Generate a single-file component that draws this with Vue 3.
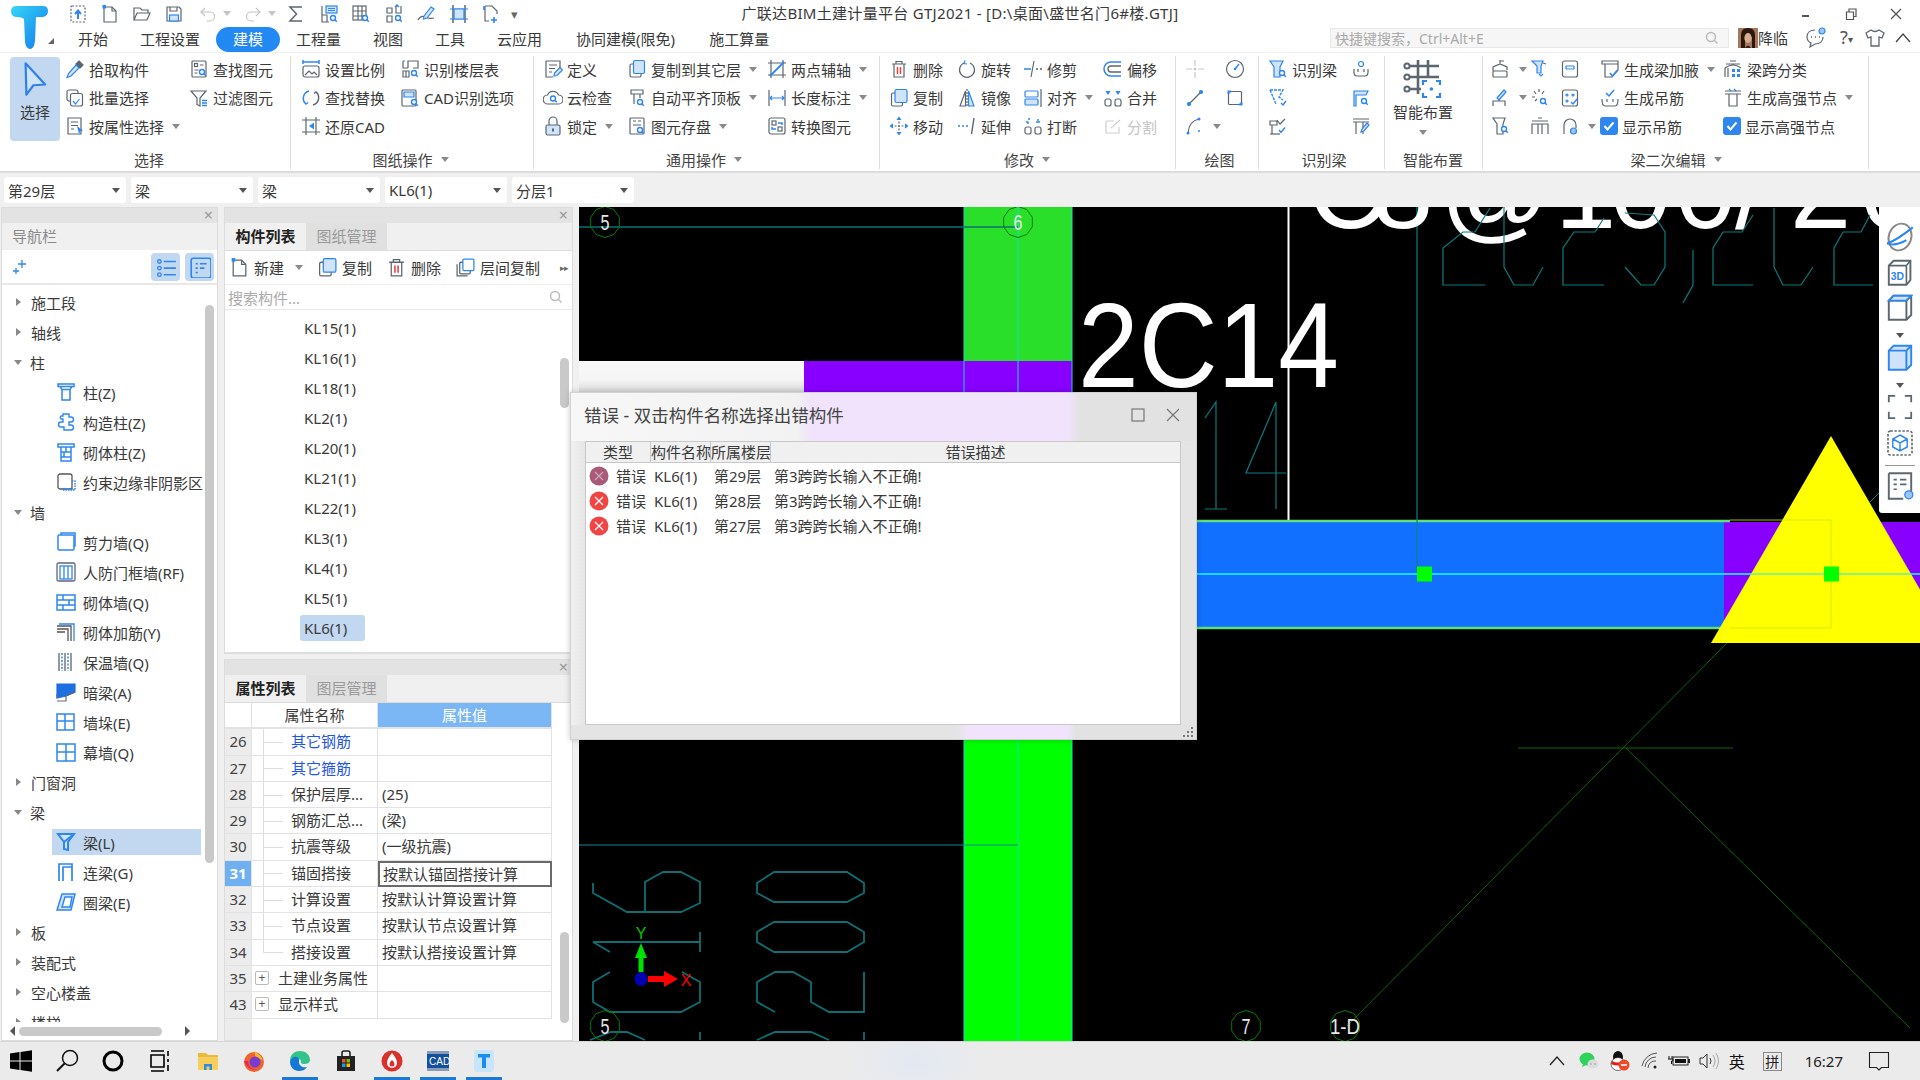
<template>
  <div class="app">
    <!-- title + menu -->
    <header class="top">
      <svg class="logo" width="62" height="52" viewBox="0 0 62 52">
        <defs>
          <linearGradient id="lg" x1="0" y1="0" x2="1" y2="1">
            <stop offset="0" stop-color="#35d6f5" />
            <stop offset="1" stop-color="#1379ee" />
          </linearGradient>
        </defs>
        <path d="M11 11q0-5 6-5h26q5 0 5 5t-5 6h-7l-1 24q-1 8-5 8t-5-7l-1-23q-2-2-7-2-6 0-6-6z" fill="url(#lg)" />
        <path d="M48 44l6 0 0-6z" fill="#666" />
      </svg>
      <div class="top-right">
        <div class="title-row">
          <div class="quick">
            <Ic n="upload" /><Ic n="newdoc" /><Ic n="open" /><Ic n="save" />
            <Ic n="undo" class="q-undo" /><i class="tri grey q-tri" />
            <Ic n="redo" class="q-redo" /><i class="tri grey q-tri" />
          </div>
          <div class="quick quick2">
            <Ic n="sigma" /><Ic n="qtable" /><Ic n="qgrid" /><Ic n="qnode" /><Ic n="qpen" /><Ic n="qcols" /><Ic n="qadd" />
            <span class="q-more">▾</span>
          </div>
          <div class="win-title">广联达BIM土建计量平台 GTJ2021 - [D:\桌面\盛世名门6#楼.GTJ]</div>
          <div class="win-btns">
            <svg width="12" height="12" viewBox="0 0 12 12"><path d="M2 8h7" stroke="#555" stroke-width="2" /></svg>
            <svg width="12" height="12" viewBox="0 0 12 12" fill="none" stroke="#555" stroke-width="1.2"><path d="M1.5 4h7v7.5h-7zM4 4V1h7v7.5H8.500" /></svg>
            <svg width="12" height="12" viewBox="0 0 12 12" stroke="#555" stroke-width="1.3"><path d="M1 1l10 10M11 1L1 11" /></svg>
          </div>
        </div>
        <div class="menu-row">
          <span v-for="m in menus" :key="m" class="menu-item" :class="{ on: m === '建模', wide: m.includes('限免') }">{{ m }}</span>
          <div class="user-area">
            <div class="search">
              <span>快捷键搜索，Ctrl+Alt+E</span>
              <svg width="14" height="14" viewBox="0 0 14 14" fill="none" stroke="#bbb" stroke-width="1.5"><circle cx="6" cy="6" r="4.500" /><path d="M9.500 9.500l3 3" /></svg>
            </div>
            <svg class="avatar" width="20" height="20" viewBox="0 0 20 20">
              <rect width="20" height="20" fill="#a57a5c" />
              <path d="M3 20V7q0-7 7-7t7 7v13h-3V9q-4-1-7 0v11z" fill="#2a1712" />
              <ellipse cx="10" cy="10" rx="3.600" ry="5" fill="#d8ac8e" />
              <path d="M7 20q3-5 6 0z" fill="#3a2018" />
            </svg>
            <span class="user">降临</span>
            <svg class="u-chat" width="22" height="22" viewBox="0 0 22 22" fill="none" stroke="#5c6670" stroke-width="1.2">
              <path d="M10 3C5 3 2 6 2 10c0 3 2 5 4 6l-1 4 5-3c5 0 8-3 8-7" />
              <circle cx="17" cy="4" r="3" fill="#9cc4f5" stroke="#2e86f0" />
              <path d="M6 10h1M10 10h1M14 10h1" stroke-width="1.6" />
            </svg>
            <span class="u-help">?<i>▾</i></span>
            <svg class="u-shirt" width="20" height="20" viewBox="0 0 20 20" fill="none" stroke="#5c6670" stroke-width="1.3"><path d="M6 2L1 5l2 5 3-1v9h8V9l3 1 2-5-5-3q-4 3-8 0z" /></svg>
            <svg class="u-up" width="18" height="12" viewBox="0 0 18 12" fill="none" stroke="#444" stroke-width="1.3"><path d="M2 10l7-8 7 8" /></svg>
          </div>
        </div>
      </div>
    </header>

    <!-- ribbon -->
    <section class="ribbon">
      <div v-for="g in groups" :key="g.name" class="group" :style="{ width: g.w + 'px' }">
        <div class="group-body" :style="{ paddingLeft: g.pl + 'px' }">
          <div v-if="g.big === 'select'" class="big-select">
            <svg width="28" height="36" viewBox="0 0 32 46" fill="#cfe3fb" stroke="#2e80ea" stroke-width="2.8" stroke-linejoin="round"><path d="M4 3l25 27-15 1-9 12z" /></svg>
            <span>选择</span>
          </div>
          <div v-if="g.big === 'smart'" class="big-smart">
            <Ic n="smart" :s="40" />
            <span>智能布置</span>
            <i class="tri" />
          </div>
          <div v-for="(col, ci) in g.cols" :key="ci" class="rcol" :style="{ width: col.w + 'px' }">
            <div v-for="(it, ii) in col.items" :key="ii" class="ritem" :class="{ dis: it.dis }">
              <span v-if="it.check" class="check"><svg width="14" height="14" viewBox="0 0 14 14" fill="none" stroke="#fff" stroke-width="2"><path d="M2.500 7l3 3.500 6-7" /></svg></span>
              <Ic v-if="it.i" :n="it.i" />
              <span v-if="it.t" class="rtext">{{ it.t }}</span>
              <i v-if="it.arrow" class="tri" />
            </div>
          </div>
        </div>
        <div class="group-label" :style="{ marginLeft: (g.lx || 0) + 'px' }">{{ g.name }}<i v-if="g.more" class="tri" /></div>
      </div>
    </section>

    <!-- floor / type selectors -->
    <div class="combos">
      <div v-for="c in combos" :key="c.k" class="combo"><span>{{ c.t }}</span><i class="tri dark" /></div>
    </div>

    <main class="main">
      <!-- navigation -->
      <aside class="nav panel">
        <div class="panel-bar"><span>×</span></div>
        <div class="nav-head">导航栏</div>
        <div class="nav-tools">
          <svg width="14" height="16" viewBox="0 0 14 16" fill="none" stroke="#2e86f0" stroke-width="1.3"><path d="M9 1v8M5 5h8M3 9v6M0 12h6" /></svg>
          <span class="nav-btn nav-btn1"><Ic n="listv" :s="22" /></span>
          <span class="nav-btn"><Ic n="listc" :s="22" /></span>
        </div>
        <div class="tree">
          <div v-for="n in tree" :key="n.t" class="tree-row" :class="{ child: n.i, sel: n.sel }">
            <i v-if="!n.i" class="tw" :class="{ open: n.open }" />
            <Ic v-if="n.i" :n="n.i" />
            <span>{{ n.t }}</span>
          </div>
          <div class="v-thumb nav-thumb" />
        </div>
        <div class="h-scroll">
          <i class="ha left" /><div class="h-thumb" /><i class="ha" />
        </div>
      </aside>

      <div class="mid">
        <!-- component list -->
        <section class="panel mid-top">
          <div class="panel-bar"><span>×</span></div>
          <div class="tabs"><span class="tab on">构件列表</span><span class="tab">图纸管理</span></div>
          <div class="list-tools">
            <span class="lt"><Ic n="newdoc" :s="21" />新建<i class="tri" /></span>
            <span class="lt"><Ic n="copy" :s="21" />复制</span>
            <span class="lt"><Ic n="del" :s="21" />删除</span>
            <span class="lt"><Ic n="copy2" :s="21" />层间复制</span>
            <span class="lt-more">▸▸</span>
          </div>
          <div class="list-search">
            <span>搜索构件...</span>
            <svg width="14" height="14" viewBox="0 0 14 14" fill="none" stroke="#bbb" stroke-width="1.5"><circle cx="6" cy="6" r="4.500" /><path d="M9.500 9.500l3 3" /></svg>
          </div>
          <div class="list">
            <div v-for="k in beams" :key="k" class="list-row"><span :class="{ sel: k === 'KL6(1)' }">{{ k }}</span></div>
            <div class="v-thumb list-thumb" />
          </div>
        </section>

        <!-- property list -->
        <section class="panel mid-bot">
          <div class="panel-bar"><span>×</span></div>
          <div class="tabs"><span class="tab on">属性列表</span><span class="tab">图层管理</span></div>
          <div class="props">
            <div class="prow phead">
              <div class="pn blank" /><div class="pname">属性名称</div><div class="pval">属性值</div>
            </div>
            <div v-for="(p, i) in props" :key="p.n" class="prow" :class="{ act: p.n === 31 }">
              <div class="pn">{{ p.n }}</div>
              <div class="pname" :class="{ link: p.link, grp: p.grp, guide: !p.grp, last: i === 8 }">
                <i v-if="p.grp" class="plus">+</i>{{ p.name }}
              </div>
              <div class="pval">{{ p.val }}</div>
            </div>
            <div class="v-thumb prop-thumb" />
          </div>
        </section>
      </div>

      <!-- drawing canvas -->
      <div class="canvas">
        <svg class="cad" viewBox="579 207 1341 834" width="1341" height="834" fill="none">
          <defs>
            <linearGradient id="fade" x1="0" y1="0" x2="0" y2="1">
              <stop offset="0" stop-color="#f8f8f8" />
              <stop offset="0.6" stop-color="#f5f5f5" />
              <stop offset="1" stop-color="#dadada" />
            </linearGradient>
          </defs>
          <!-- beam + column fills -->
          <rect x="964" y="207" width="108" height="154" fill="#2adf2a" />
          <rect x="964" y="392" width="108" height="649" fill="#00ff00" />
          <rect x="579" y="361" width="225" height="31" fill="url(#fade)" />
          <rect x="804" y="361" width="268" height="31" fill="#8800ff" />
          <rect x="1190" y="522" width="534" height="106" fill="#1170ff" />
          <rect x="1724" y="522" width="196" height="106" fill="#8800ff" />
          <path d="M1190 521h540M1190 628h540" stroke="#5fe07a" stroke-width="2.5" />
          <path d="M964 207V1041M1072 207V1041" stroke="#16d8e0" stroke-width="1" />
          <path d="M1018 207V392M1018 741V1041" stroke="#14dcc8" stroke-width="1" />
          <path d="M579 227H1018" stroke="#0c7070" stroke-width="1.6" />
          <path d="M579 845H1018" stroke="#0f8a95" stroke-width="1" />
          <path d="M1288.500 207V520" stroke="#fff" stroke-width="2" />
          <path d="M1417 207V574" stroke="#0c8080" stroke-width="1.2" />
          <path d="M1190 574H1920" stroke="#1ce6ff" stroke-width="1.4" />
          <!-- grid lines behind -->
          <path d="M1518 748H1733M1727 643L1347 1026M1626 748L1910 1028" stroke="#0b660b" stroke-width="1" />
          <path d="M1879 493L1870 502" stroke="#0c8080" stroke-width="1" />
          <path d="M1831 436L1711 643H1951z" fill="#ffff00" />
          <path d="M1730 520H1831V628H1730" stroke="#c8e800" stroke-width="0.8" />
          <path d="M1190 574H1920" stroke="#1ce6ff" stroke-width="1.2" />
          <rect x="1417" y="566.500" width="15" height="15" fill="#00ff00" />
          <rect x="1824" y="566.500" width="15" height="15" fill="#00ff00" />
          <!-- rebar text -->
          <text class="cad-big" x="1078" y="387" font-size="120" textLength="261" lengthAdjust="spacingAndGlyphs">2C14</text>
          <text class="cad-big" x="1308 1372 1440 1555 1610 1675 1735 1790 1860" y="228" font-size="110">C8@100/20</text>
          <!-- outline letters -->
          <g stroke="#0b7c80" stroke-width="1.2">
            <path d="M1485 285H1443V248L1463 232H1475L1490 208M1504 207V267L1514 285H1533L1543 267M1604 285H1563V248L1574 232H1595L1604 218M1625 267L1641 285H1654L1665 267V232L1654 215L1625 213M1693 250V285L1683 303M1753 285H1713V248L1723 232H1742L1753 215M1774 208V267L1783 285H1801L1813 267M1873 285H1834V248L1843 232H1861L1870 215" />
            <path d="M1205 418L1216 402V509M1205 509H1227M1276 402L1246 473H1286M1276 402V509" />
          </g>
          <g stroke="#0d6f73" stroke-width="1.8">
            <path d="M593 883V893L627 912H681L700 903V882L681 872H663L645 882V912" />
            <path d="M593 942H700M700 932V952M593 942L610 952" />
            <path d="M610 972L593 982V1002L610 1012H681L700 1002V982L682 972" />
            <path d="M590 1040L611 1032H627L645 1040M700 1032V1040" />
            <path d="M757 883L774 872H847L864 883V893L847 902H774L757 893Z" />
            <path d="M757 932L774 922H847L864 932V942L847 952H774L757 942Z" />
            <path d="M775 1012L757 1002V982L775 972H793L811 982V1002L829 1012H864V972" />
            <path d="M757 1040L775 1032H811L829 1040M864 1032V1040" />
          </g>
          <!-- axis tags -->
          <g v-for="t in axisTags" :key="t.k">
            <polygon :points="ring(t.x, t.y)" stroke="#0b7a0b" stroke-width="1" />
            <text class="cad-tag" :x="t.x" :y="t.y + 8" text-anchor="middle" :textLength="t.l" lengthAdjust="spacingAndGlyphs">{{ t.t }}</text>
          </g>
          <!-- coordinate gizmo -->
          <path d="M641 972V958" stroke="#00e000" stroke-width="5" />
          <path d="M641 943L647 958H635z" fill="#00e000" />
          <path d="M648 979H664" stroke="#ff0000" stroke-width="6" />
          <path d="M678 979L664 971V987z" fill="#ff0000" />
          <ellipse cx="641" cy="979" rx="6.500" ry="7" fill="#0000b0" />
          <text class="cad-y" x="641" y="939" text-anchor="middle">Y</text>
          <text class="cad-x" x="686" y="986" text-anchor="middle">X</text>
        </svg>

        <div class="view-bar">
          <Ic n="orbit" :s="32" class="vb" />
          <Ic n="cube3d" :s="32" class="vb" />
          <Ic n="cube" :s="32" class="vb" />
          <i class="tri dark vb-tri" />
          <Ic n="cubeblue" :s="32" class="vb" />
          <i class="tri dark vb-tri" />
          <Ic n="frame" :s="32" class="vb vb-frame" />
          <Ic n="cubedash" :s="32" class="vb" />
          <div class="vb-sep" />
          <Ic n="report" :s="32" class="vb" />
        </div>
      </div>

      <!-- error dialog -->
      <div class="dialog">
        <div class="dlg-title">
          <span class="dlg-text">错误 - 双击构件名称选择出错构件</span>
          <svg width="14" height="14" viewBox="0 0 14 14" fill="none" stroke="#777" stroke-width="1.2"><rect x="1" y="1" width="12" height="12" /></svg>
          <svg class="dlg-close" width="14" height="14" viewBox="0 0 14 14" stroke="#777" stroke-width="1.2"><path d="M1 1l12 12M13 1L1 13" /></svg>
        </div>
        <div class="dlg-table">
          <div class="dlg-row dlg-head">
            <span class="c-type">类型</span><span class="c-name">构件名称</span><span class="c-floor">所属楼层</span><span class="c-desc">错误描述</span>
          </div>
          <div v-for="(e, i) in errors" :key="e.floor" class="dlg-row">
            <span class="c-type c-left">
              <svg width="20" height="20" viewBox="0 0 20 20">
                <circle cx="10" cy="10" r="9.500" :fill="i === 0 ? '#a85a78' : '#f14444'" />
                <path d="M6 6l8 8M14 6l-8 8" :stroke="i === 0 ? '#caa8b8' : '#fff'" stroke-width="1.2" />
              </svg>
              错误
            </span>
            <span class="c-name c-cell">KL6(1)</span>
            <span class="c-floor c-cell">{{ e.floor }}</span>
            <span class="c-desc c-cell">第3跨跨长输入不正确!</span>
          </div>
        </div>
        <div class="dlg-foot">
          <svg width="10" height="10" viewBox="0 0 10 10" fill="#777"><rect x="8" y="0" width="2" height="2" /><rect x="8" y="4" width="2" height="2" /><rect x="4" y="4" width="2" height="2" /><rect x="8" y="8" width="2" height="2" /><rect x="4" y="8" width="2" height="2" /><rect x="0" y="8" width="2" height="2" /></svg>
        </div>
      </div>
    </main>

    <!-- windows taskbar -->
    <footer class="taskbar">
      <div class="tb-left">
        <span v-for="t in taskIcons" :key="t.k" class="tb-icon" :class="{ run: t.run }">
          <svg width="24" height="24" viewBox="0 0 24 24" v-html="t.svg" />
        </span>
      </div>
      <div class="tray">
        <svg width="16" height="10" viewBox="0 0 16 10" fill="none" stroke="#222" stroke-width="1.2"><path d="M1 9l7-8 7 8" /></svg>
        <svg class="t-wx" width="20" height="20" viewBox="0 0 20 20"><ellipse cx="8" cy="8" rx="7.500" ry="6.500" fill="#2fd35a" /><path d="M4 13l-1 3 4-2z" fill="#2fd35a" /><ellipse cx="14" cy="13" rx="5.500" ry="4.500" fill="#dcdcdc" /><circle cx="12" cy="13" r=".8" fill="#999" /><circle cx="16" cy="13" r=".8" fill="#999" /></svg>
        <svg class="t-qq" width="20" height="22" viewBox="0 0 20 22"><ellipse cx="8" cy="7" rx="5" ry="6" fill="#111" /><ellipse cx="8" cy="14" rx="7" ry="6.500" fill="#fff" stroke="#111" stroke-width=".6" /><path d="M2 11q6 3 12 0l1 3q-7 3-14 0z" fill="#e01e1e" /><circle cx="14" cy="15" r="5.500" fill="#f0492a" /><path d="M11 15h6" stroke="#fff" stroke-width="1.6" /></svg>
        <svg class="t-wifi" width="18" height="18" viewBox="0 0 18 18" fill="none" stroke="#555" stroke-width="1"><path d="M1 14a16 16 0 0 1 15-13M4 15a11 11 0 0 1 11-10M7 16a7 7 0 0 1 8-7" /><circle cx="14" cy="15" r="1.500" fill="#222" stroke="none" /></svg>
        <svg class="t-bat" width="22" height="14" viewBox="0 0 22 14"><path d="M1 2v3M4 2v3M0 5h5v2H3.500v3" stroke="#111" fill="none" /><rect x="5" y="3" width="15" height="8" fill="none" stroke="#222" /><rect x="7" y="5" width="11" height="4" fill="#111" /><rect x="20" y="5" width="2" height="4" fill="#222" /></svg>
        <svg class="t-vol" width="20" height="18" viewBox="0 0 20 18" fill="none" stroke="#333" stroke-width="1"><path d="M1 6h3l4-4v14l-4-4H1z" /><path d="M11 6q2 3 0 6" /><path d="M14 3q4 6 0 12M17 1q5 8 0 16" stroke="#aaa" /></svg>
        <span class="t-lang">英</span>
        <span class="t-pin">拼</span>
        <span class="t-time">16:27</span>
        <svg class="t-note" width="22" height="20" viewBox="0 0 22 20" fill="none" stroke="#222" stroke-width="1.1"><path d="M1.500 1.500h19v15h-7l-2.500 2.500-2.500-2.500h-7z" /></svg>
      </div>
    </footer>
  </div>
</template>

<script setup>
import { h } from 'vue'

const B = 'stroke="#2e86f0"'
const L = 'fill="#cfe3fb"'
const W = 'fill="#fff"'
const mag = (x, y) => `<circle cx="${x}" cy="${y}" r="2.500" ${B} ${W} stroke-width="1.4"/><path d="M${x + 1.8} ${y + 1.8}l2 2" ${B} stroke-width="1.5"/>`

// 20x20 toolbar glyphs
const icons = {
  upload: `<rect x="3" y="2" width="14" height="16" rx="1" stroke-dasharray="2 1.500"/><path d="M10 15V7M7 10l3-3.500 3 3.500" ${B} stroke-width="2"/>`,
  newdoc: `<path d="M4 3h8l4 4v11H4z"/><path d="M12 3v4h4"/><rect x="2.500" y="1" width="3.500" height="3.500" fill="#2e86f0" stroke="none"/>`,
  open: `<path d="M2 16V4h6l2 2h6v3M2 16l3-7h13l-3 7z"/>`,
  save: `<path d="M3 3h12l2 2v12H3z"/><path d="M6 3v4h7V3"/><rect x="5.500" y="11" width="9" height="6" ${L} ${B}/>`,
  undo: `<path d="M7 4L3 8l4 4M3 8h9a4.500 4.500 0 0 1 0 9H9" stroke="#c4c4c4"/>`,
  redo: `<path d="M13 4l4 4-4 4M17 8H8a4.500 4.500 0 0 0 0 9h3" stroke="#c4c4c4"/>`,
  sigma: `<path d="M16 3H4l6.500 7L4 17h12" stroke-width="1.500"/>`,
  qtable: `<path d="M3 2v16h7M3 11h5v7"/><rect x="7" y="2" width="11" height="7" ${B} ${L}/><path d="M9 4.500h7M9 6.500h7" ${B}/>${mag(14, 14)}`,
  qgrid: `<rect x="2" y="2" width="13" height="14"/><path d="M2 7h13M2 12h13M7 2v14M11 2v14"/>${mag(14, 14)}`,
  qnode: `<path d="M3 4h5v5H3zM12 2v7h5V2M3 12h5v6H3z"/><path d="M11 3l2-2 2 2" ${B} stroke-width="1.500"/>${mag(14, 14)}`,
  qpen: `<path d="M2 16q3-5 7-3t9 1"/><path d="M8 12l7-9 3 2-7 9-3.500 1z" ${B} ${L}/>`,
  qcols: `<path d="M4 1v18M16 1v18" stroke-width="1.500"/><path d="M1 5h18M1 15h18" ${B}/><path d="M5 5h10v10H5z" ${L} ${B}/>`,
  qadd: `<path d="M4 2h7l5 5v3M4 2v15h4"/><path d="M3 6V2M13 13v6M10 16h6" ${B} stroke-width="1.600"/>`,
  pick: `<path d="M14 2l4 4-3 3-4-4z" fill="#5c6670"/><path d="M11 6l3 3-8 8-4 1.500 1.500-4z" ${L} ${B}/>`,
  batch: `<rect x="2" y="2" width="11" height="11" rx="2"/><rect x="5.500" y="5.500" width="12" height="12.500" rx="2" ${W}/><path d="M8 13l2.500 3 4-5" ${B}/>`,
  propsel: `<path d="M3 2h13v16H3z"/><path d="M6 6h7M6 9.500h7M6 13h3"/><path d="M12 10l6 4.500-2.500.5-1.500 3z" fill="#2e86f0" stroke="none"/>`,
  find: `<rect x="3" y="2" width="14" height="16" rx="1"/><rect x="5.500" y="4.500" width="3" height="3"/><path d="M11 6h3.500M5.500 11h4M5.500 14h3"/>${mag(13, 13)}`,
  filter: `<path d="M2 3h15l-6 7v8l-3-1.500V10z"/><path d="M13 12.500h5M13 15h5M13 17.500h5" ${B} stroke-width="1.500"/>`,
  scale: `<path d="M2 3h16M2 1v4M18 1v4" ${B} stroke-width="1.500"/><rect x="2" y="7" width="16" height="11" rx="2"/><path d="M4 16l4-4 3 3 2-2 3 3"/>`,
  replace: `<path d="M8 3a7.500 7.500 0 0 0-3 13M3 14l2 2 2-1.500" ${B} stroke-width="1.500"/><path d="M12 17a7.500 7.500 0 0 0 3-13M17 6l-2-2-2 1.500" stroke-width="1.500"/>`,
  restore: `<path d="M5 1v18M15 1v18M1 4h18M1 16h18"/><path d="M13 6.500L8 10l5 3.500z" fill="#2e86f0" stroke="none"/>`,
  floortbl: `<path d="M3 2v7h5M12 2h6v7h-5M8 9V2h4M3 12h6v6H3zM6 12v6"/><path d="M3 2h2" ${B}/>${mag(14, 14)}`,
  cadopt: `<rect x="2" y="2" width="14" height="16" rx="1"/><path d="M4 4h10v5H4z" ${B} ${L}/>${mag(14, 14)}`,
  define: `<path d="M3 2h14v9M3 2v16h7"/><path d="M6 6h8M6 9.500h6M6 13h3"/><path d="M11 17l.5-3 5.500-5.500 2.500 2.500-5.500 5.500z" ${B} ${L}/>`,
  cloud: `<path d="M5 16a4.500 4.500 0 0 1-.5-9 6 6 0 0 1 11 0 4.500 4.500 0 0 1 0 9z"/>${mag(10, 10.5)}`,
  lock: `<path d="M6 9V5a4 4 0 0 1 8 0v4"/><rect x="3" y="9" width="14" height="10" rx="1.500" ${L}/><path d="M10 12.500v3" stroke-width="2"/>`,
  copyfloor: `<rect x="3" y="5" width="11" height="13" rx="1.500"/><rect x="6.500" y="1.500" width="11" height="13" rx="1.500" ${B} ${L}/>`,
  aligntop: `<path d="M4 2h12v4H4zM7 6v10M13 6v4"/>${mag(13, 14)}`,
  store: `<rect x="3" y="2" width="14" height="16" rx="1"/><path d="M6 5h3M11 5h3M6 9h8"/>${mag(13, 14)}`,
  twoaxis: `<path d="M4 1v18M16 1v18M1 4h18M1 16h18"/><path d="M3 17L17 3" ${B} stroke-width="1.800"/>`,
  dim: `<path d="M2 2v16M18 2v16"/><path d="M3 10h14M5 8l-2 2 2 2M15 8l2 2-2 2" ${B}/>`,
  convert: `<rect x="2" y="2" width="16" height="16" rx="2"/><rect x="5" y="5" width="4" height="4"/><rect x="11" y="11" width="4" height="4"/><path d="M11 7h4v2M9 13H5v-2" ${B} stroke-width="1.500"/>`,
  del: `<path d="M3 5h14M7 5V2.500h6V5M5 5v13h10V5" /><path d="M8.500 8v7M11.500 8v7" stroke="#e84040" stroke-width="1.500"/>`,
  copy: `<rect x="2.500" y="5" width="11" height="13" rx="1.500"/><rect x="6" y="1.500" width="12" height="13" rx="1.500" ${B} ${L}/>`,
  copy2: `<path d="M2 7v11h10"/><rect x="4.500" y="5" width="10" height="11" rx="1"/><rect x="7.500" y="2" width="10.500" height="11" rx="1" ${B} ${W}/>`,
  move: `<path d="M10 2v16M2 10h16" stroke-dasharray="2 1.500"/><path d="M8 4l2-2.500L12 4M8 16l2 2.500 2-2.500M4 8l-2.500 2L4 12M16 8l2.500 2-2.500 2" ${B} fill="#2e86f0"/>`,
  rotate: `<path d="M13 4a7.500 7.500 0 1 1-6 0"/><path d="M8 1.500l-1 3 3 .5" ${B}/>`,
  mirror: `<path d="M8.500 3L3 18h5.500z"/><path d="M11.500 3L17 18h-5.500z" ${L} ${B}/><path d="M10 1v18" stroke-dasharray="2 1"/>`,
  extend: `<path d="M1 10h2M5 10h2M9 10h2" ${B} stroke-width="1.500"/><path d="M17 2l-2.500 16" stroke-width="1.400"/>`,
  trim: `<path d="M1 10h7" ${B} stroke-width="1.500"/><path d="M11 2L8 18"/><path d="M13 10h2M17 10h2" stroke-width="1.500"/>`,
  align: `<path d="M18 1v18"/><rect x="2" y="3" width="13" height="6" rx="1" ${B}/><rect x="2" y="11" width="13" height="6" rx="1" ${B} ${L}/>`,
  merge: `<rect x="2" y="11" width="6" height="7" rx="2"/><rect x="12" y="11" width="6" height="7" rx="2"/><path d="M3 3l2 3 2-3M13 3l2 3 2-3" ${B} fill="#2e86f0"/>`,
  breakat: `<rect x="2" y="11" width="6" height="7" rx="2"/><rect x="12" y="11" width="6" height="7" rx="2"/><path d="M3 6h2v2M7 3H5M13 6h4M15 3v2" ${B} stroke-width="1.400"/>`,
  offset: `<path d="M18 3H8a7 7 0 0 0 0 14h10" ${B} stroke-width="1.500"/><path d="M18 7H8a3 3 0 0 0 0 6h10" stroke-width="1.300"/>`,
  split: `<path d="M3 5h8M3 5v12h13v-6" stroke="#d0d0d0"/><path d="M8 12l9-8" stroke="#d0d0d0"/>`,
  point: `<path d="M10 1v6M10 13v6M1 10h6M13 10h6" stroke="#c8c8c8"/><circle cx="10" cy="10" r="1.500" fill="#c8c8c8" stroke="none"/>`,
  gauge: `<circle cx="10" cy="10" r="8.500"/><path d="M10 10l4-5" ${B} stroke-width="1.500"/><circle cx="10" cy="10" r="1.300" fill="#2e86f0" stroke="none"/>`,
  line: `<path d="M4 16L16 4"/><circle cx="4" cy="16" r="1.500" fill="#2e86f0" ${B}/><circle cx="16" cy="4" r="1.500" fill="#2e86f0" ${B}/>`,
  rect: `<rect x="3.500" y="3.500" width="13" height="13" rx="1"/><path d="M3.500 6V3.500H6M14 16.500h2.500V14" ${B} stroke-width="2"/>`,
  arc: `<path d="M3 17Q4 5 14 3"/><circle cx="3" cy="17" r="1.500" fill="#2e86f0" stroke="none"/><circle cx="14" cy="3" r="1.500" fill="#2e86f0" stroke="none"/><circle cx="14" cy="15" r="1" fill="#2e86f0" stroke="none"/>`,
  rbeam: `<path d="M2 2l13 0-3 6v10H6V8z" ${B} ${L}/>${mag(14, 14)}`,
  rbeam2: `<path d="M2 2h13l-4 7 4 3M2 2l6 14" ${B} stroke-width="1.400" stroke-dasharray="3 1"/><path d="M13 15l2 2 3-4" ${B} stroke-width="1.400"/>`,
  rbeam3: `<path d="M2 5h7v4H2zM4 9v9M9 4l3 4 5-5"/><path d="M2 18h10"/><path d="M11 14l2 2.500 4-5" ${B} stroke-width="1.400"/>`,
  rsmall: `<circle cx="10" cy="5" r="2.500" ${B}/><path d="M3 10v3q0 4 3 4h8q3 0 3-4v-3"/><path d="M7 10v3M13 10v3"/>`,
  rsmall2: `<path d="M3 3h14l-2 4H5v11H3z" ${B} ${L}/>${mag(13, 13)}`,
  rsmall3: `<path d="M2 3h16M2 6h16M5 6v12M12 6v12"/><path d="M10 16l1-3 5-6 2 2-5 6z" ${B} ${L}/>`,
  smart: `<path d="M3 4h15M3 9.500h15M3 15.500h6M7.500 1v17M12.500 1v9" stroke-width="1.300"/><circle cx="2" cy="4" r="1.300" ${W} stroke-width="1"/><circle cx="2" cy="9.500" r="1.300" ${W} stroke-width="1"/><circle cx="2" cy="15.500" r="1.300" ${W} stroke-width="1"/><path d="M12 11.500H10v2M16.500 11.500h2v2M12 19.500h-2v-2M16.500 19.500h2v-2" ${B} stroke-width="1.100"/><circle cx="14.200" cy="15.500" r=".9" fill="#2e86f0" stroke="none"/>`,
  e1: `<path d="M9 1v4M9 2h4M2 12V8l7-3 7 3v3"/><rect x="2" y="12" width="14" height="6" rx="1"/>`,
  e2: `<path d="M2 2h11l-2 5v7H7V7z" ${B} ${L}/><path d="M13 15l-2 2-2-2" ${B}/><path d="M13 4l3 1"/>`,
  e3: `<rect x="2.500" y="2" width="15" height="16" rx="2"/><path d="M6 7h8M6 10h8M6 7v3M14 7v3" ${B}/>`,
  e4: `<path d="M2 18v-5h12v5M8 13V9"/><path d="M6 10l7-8 2 2-7 8z" ${B} ${L}/>`,
  e5: `<path d="M9 1v3M4 3l2 3M14 3l-2 3M2 9h3M5 13l2-2"/>${mag(13, 13)}`,
  e6: `<rect x="2.500" y="2" width="15" height="16" rx="2"/><circle cx="7" cy="7" r="1" ${B}/><circle cx="13" cy="7" r="1" ${B}/><circle cx="7" cy="13" r="1" ${B}/><path d="M11 14l2 2 4-5" ${B} stroke-width="1.400"/>`,
  e7: `<path d="M2 2h12l-2 6v10H6V8z"/>${mag(13, 13)}`,
  e8: `<path d="M2 18V8h16v10M2 5h16M8 2h4M8 8v10M12 8v10"/>`,
  e9: `<path d="M4 18V9a6 6 0 0 1 12 0v3"/><circle cx="13.500" cy="15" r="3" fill="#9cc4f5" ${B}/>`,
  genhaunch: `<path d="M2 2h16v3H2zM5 5v13h7l6-7V5"/><path d="M10 14l2.500 3 5-6" ${B} stroke-width="1.500"/>`,
  genhang: `<path d="M2 11q0 7 3 7h10q3 0 3-7M7 11v3M13 11v3"/><path d="M6 5l3 3 5-6" ${B} stroke-width="1.500"/>`,
  span: `<path d="M2 18V9q8-6 16 0M3 5h14M7 2h6M5 9v9"/><rect x="9" y="10" width="3" height="3" fill="#2e86f0" stroke="none"/><rect x="14" y="10" width="3" height="3" fill="#2e86f0" stroke="none"/><rect x="9" y="15" width="3" height="3" fill="#2e86f0" stroke="none"/><rect x="14" y="15" width="3" height="3" fill="#2e86f0" stroke="none"/>`,
  node: `<path d="M2 6h16M6 6v12h8V6M2 3h16"/><path d="M6 1l2 2M11 1l2 2" ${B}/>`,
  listv: `<circle cx="4" cy="5" r="1.600" ${B}/><circle cx="4" cy="11" r="1.600" ${B}/><circle cx="4" cy="17" r="1.600" ${B}/><path d="M8 5h11M8 11h11M8 17h11" ${B} stroke-width="1.500"/>`,
  listc: `<rect x="2" y="2" width="18" height="18" rx="2" ${B} stroke-width="1.500"/><path d="M6 7h2M10 7h6M6 11h2M10 11h4M6 15h2" ${B} stroke-width="1.500"/>`,
  // structural tree
  tZ: `<g ${B} stroke-width="1.500"><path d="M2 2h16v2.500H2zM4 4.500l2 3h8l2-3M6 7.500V18h8V7.500"/></g>`,
  tGZ: `<g ${B} stroke-width="1.400"><path d="M7 2h6v3h2a2 2 0 0 1 0 5h-2v3h2a2 2 0 0 1 0 5h-7v-3H5a2 2 0 0 1 0-5h2V7H5a2 2 0 0 1 0-3h2z"/></g>`,
  tQZ: `<g ${B} stroke-width="1.500"><path d="M2 2h16v3H2zM5 5v14h10V5M5 10h10M5 15h10M10 5v5M8 10v5"/></g>`,
  tYS: `<rect x="2" y="2" width="14" height="15" rx="2" stroke="#555" stroke-width="1.300"/><path d="M16 9h3v9H6v-1M8 17h10" ${B} stroke-width="1.500" stroke-dasharray="1.500 1"/>`,
  tJL: `<g ${B} stroke-width="1.500"><rect x="2" y="3" width="16" height="15" rx="1"/><path d="M5 3V1h14v13h-1" /></g>`,
  tRF: `<rect x="1" y="1" width="18" height="18" rx="1.500" stroke="#667" stroke-width="1.300"/><rect x="4" y="4" width="12" height="13" ${B} stroke-width="1.300"/><path d="M8 4v13M12 4v13" ${B} stroke-width="1.300"/>`,
  tQT: `<g ${B} stroke-width="1.500"><rect x="1" y="3" width="18" height="15"/><path d="M1 8h18M1 13h18M7 3v5M13 8v5M7 13v5"/></g>`,
  tJJ: `<path d="M1 4h14v15M1 7h11v12M1 10h8" stroke="#555" stroke-width="1.300"/><path d="M3 2h15v17" ${B} stroke-width="1.300"/>`,
  tBW: `<path d="M3 1v18M9 1v18M15 1v18" stroke="#555" stroke-width="1.200"/><path d="M6 1v18M12 1v18" ${B} stroke-width="1.500" stroke-dasharray="2 1.500"/>`,
  tAL: `<path d="M1 2h18v8l-9 4-9 2z" fill="#1e6fe0" stroke="#1e6fe0"/><path d="M1 16v-4M1 19h9v-5l9-4" stroke="#667" stroke-width="1.200"/>`,
  tDL: `<g ${B} stroke-width="1.500"><path d="M1 2h8v16H1zM9 2h9v7H9zM9 9h9v9H9zM1 9h8"/></g>`,
  tMQ: `<g ${B} stroke-width="1.500"><rect x="1" y="2" width="18" height="17"/><path d="M10 2v17M1 10h18"/></g>`,
  tL: `<g ${B} stroke-width="2"><path d="M2 2h16L12 10v8l-4-1V10z" fill="#cfe3fb"/><path d="M8 10L18 2" /></g>`,
  tLL: `<g ${B} stroke-width="1.700"><path d="M3 19V2h13v17M7 19V5h9"/></g>`,
  tQL: `<g ${B} stroke-width="1.500"><path d="M6 2h13l-4 16H1z" fill="#cfe3fb"/><path d="M9 5h7l-2 10H6z" fill="#fff"/></g>`,
  // right view bar, drawn on the same 20 unit grid
  orbit: `<ellipse cx="10" cy="10" rx="7" ry="8.500" transform="rotate(20 10 10)" stroke="#888"/><path d="M2 14Q8 12 18 4" ${B} stroke-width="1.300"/><path d="M2 14q5 2 12-2" ${B} stroke-width="1.300"/>`,
  cube3d: `<path d="M3 6l3-3h10.500v12l-2.500 3H3z"/><path d="M3 6h11v12M14 6l2.500-3" stroke-width="1"/><text x="4.200" y="15" font-size="6.500" font-weight="700" fill="#2e86f0" stroke="none" font-family="Liberation Sans">3D</text>`,
  cube: `<path d="M3 6l3-3h11v12l-3 3H3z"/><path d="M3 6h11v12M14 6l3-3" /><path d="M3 6l3-3h11l-3 3z" ${B} ${L}/>`,
  cubeblue: `<path d="M3 6l3-3h11v12l-3 3H3z" ${B} ${L} stroke-width="1.200"/><path d="M3 6h11v12M14 6l3-3" ${B}/>`,
  frame: `<path d="M3 7V3h4M13 3h4v4M17 13v4h-4M7 17H3v-4" stroke-width="1.100"/>`,
  cubedash: `<rect x="2.500" y="2.500" width="15" height="15" rx="1.500" stroke-dasharray="1.500 1" stroke-width="1"/><g ${B} stroke-width=".9"><path d="M10 5l4.500 2.500v5L10 15l-4.500-2.500v-5zM5.500 7.500L10 10l4.500-2.500M10 10v5"/></g>`,
  report: `<path d="M3 2h14v13M3 2v16h9"/><path d="M6 6h2M10 6h4M6 9h2M10 9h4M6 12h2" stroke-width="1"/><circle cx="15.500" cy="15.500" r="2.500" fill="#9cc4f5" ${B} stroke-width=".8"/>`,
}

// functional icon, size defaults to 20
const Ic = (p) => h('svg', {
  class: 'ic',
  width: p.s || 20,
  height: p.s || 20,
  viewBox: '0 0 20 20',
  fill: 'none',
  stroke: '#5c6670',
  'stroke-width': 1.2,
  innerHTML: icons[p.n] || '',
})
Ic.props = ['n', 's']

const menus = ['开始', '工程设置', '建模', '工程量', '视图', '工具', '云应用', '协同建模(限免)', '施工算量']

const groups = [
  { name: '选择', w: 291, pl: 10, big: 'select', lx: 7, cols: [
    { w: 124, items: [{ i: 'pick', t: '拾取构件' }, { i: 'batch', t: '批量选择' }, { i: 'propsel', t: '按属性选择', arrow: true }] },
    { w: 100, items: [{ i: 'find', t: '查找图元' }, { i: 'filter', t: '过滤图元' }] },
  ] },
  { name: '图纸操作', w: 243, pl: 10, more: true, lx: -4, cols: [
    { w: 99, items: [{ i: 'scale', t: '设置比例' }, { i: 'replace', t: '查找替换' }, { i: 'restore', t: '还原CAD' }] },
    { w: 130, items: [{ i: 'floortbl', t: '识别楼层表' }, { i: 'cadopt', t: 'CAD识别选项' }] },
  ] },
  { name: '通用操作', w: 346, pl: 9, more: true, lx: -6, cols: [
    { w: 84, items: [{ i: 'define', t: '定义' }, { i: 'cloud', t: '云检查' }, { i: 'lock', t: '锁定', arrow: true }] },
    { w: 140, items: [{ i: 'copyfloor', t: '复制到其它层', arrow: true }, { i: 'aligntop', t: '自动平齐顶板', arrow: true }, { i: 'store', t: '图元存盘', arrow: true }] },
    { w: 110, items: [{ i: 'twoaxis', t: '两点辅轴', arrow: true }, { i: 'dim', t: '长度标注', arrow: true }, { i: 'convert', t: '转换图元' }] },
  ] },
  { name: '修改', w: 296, pl: 9, more: true, lx: -2, cols: [
    { w: 68, items: [{ i: 'del', t: '删除' }, { i: 'copy', t: '复制' }, { i: 'move', t: '移动' }] },
    { w: 66, items: [{ i: 'rotate', t: '旋转' }, { i: 'mirror', t: '镜像' }, { i: 'extend', t: '延伸' }] },
    { w: 80, items: [{ i: 'trim', t: '修剪' }, { i: 'align', t: '对齐', arrow: true }, { i: 'breakat', t: '打断' }] },
    { w: 66, items: [{ i: 'offset', t: '偏移' }, { i: 'merge', t: '合并' }, { i: 'split', t: '分割', dis: true }] },
  ] },
  { name: '绘图', w: 83, pl: 9, lx: 4, cols: [
    { w: 40, items: [{ i: 'point' }, { i: 'line' }, { i: 'arc', arrow: true }] },
    { w: 24, items: [{ i: 'gauge' }, { i: 'rect' }] },
  ] },
  { name: '识别梁', w: 126, pl: 9, lx: 4, cols: [
    { w: 83, items: [{ i: 'rbeam', t: '识别梁' }, { i: 'rbeam2' }, { i: 'rbeam3' }] },
    { w: 24, items: [{ i: 'rsmall' }, { i: 'rsmall2' }, { i: 'rsmall3' }] },
  ] },
  { name: '智能布置', w: 98, pl: 0, big: 'smart', lx: -2, cols: [] },
  { name: '梁二次编辑', w: 386, pl: 8, more: true, lx: 0, cols: [
    { w: 39, items: [{ i: 'e1', arrow: true }, { i: 'e4', arrow: true }, { i: 'e7' }] },
    { w: 30, items: [{ i: 'e2' }, { i: 'e5' }, { i: 'e8' }] },
    { w: 40, items: [{ i: 'e3' }, { i: 'e6' }, { i: 'e9', arrow: true }] },
    { w: 123, items: [{ i: 'genhaunch', t: '生成梁加腋', arrow: true }, { i: 'genhang', t: '生成吊筋' }, { check: true, t: '显示吊筋' }] },
    { w: 140, items: [{ i: 'span', t: '梁跨分类' }, { i: 'node', t: '生成高强节点', arrow: true }, { check: true, t: '显示高强节点' }] },
  ] },
]

const combos = [
  { k: 1, t: '第29层' }, { k: 2, t: '梁' }, { k: 3, t: '梁' }, { k: 4, t: 'KL6(1)' }, { k: 5, t: '分层1' },
]

const tree = [
  { t: '施工段' }, { t: '轴线' }, { t: '柱', open: true },
  { t: '柱(Z)', i: 'tZ' }, { t: '构造柱(Z)', i: 'tGZ' }, { t: '砌体柱(Z)', i: 'tQZ' }, { t: '约束边缘非阴影区', i: 'tYS' },
  { t: '墙', open: true },
  { t: '剪力墙(Q)', i: 'tJL' }, { t: '人防门框墙(RF)', i: 'tRF' }, { t: '砌体墙(Q)', i: 'tQT' }, { t: '砌体加筋(Y)', i: 'tJJ' },
  { t: '保温墙(Q)', i: 'tBW' }, { t: '暗梁(A)', i: 'tAL' }, { t: '墙垛(E)', i: 'tDL' }, { t: '幕墙(Q)', i: 'tMQ' },
  { t: '门窗洞' }, { t: '梁', open: true },
  { t: '梁(L)', i: 'tL', sel: true }, { t: '连梁(G)', i: 'tLL' }, { t: '圈梁(E)', i: 'tQL' },
  { t: '板' }, { t: '装配式' }, { t: '空心楼盖' }, { t: '楼梯' },
]

const beams = ['KL15(1)', 'KL16(1)', 'KL18(1)', 'KL2(1)', 'KL20(1)', 'KL21(1)', 'KL22(1)', 'KL3(1)', 'KL4(1)', 'KL5(1)', 'KL6(1)']

const props = [
  { n: 26, name: '其它钢筋', val: '', link: true },
  { n: 27, name: '其它箍筋', val: '', link: true },
  { n: 28, name: '保护层厚...', val: '(25)' },
  { n: 29, name: '钢筋汇总...', val: '(梁)' },
  { n: 30, name: '抗震等级', val: '(一级抗震)' },
  { n: 31, name: '锚固搭接', val: '按默认锚固搭接计算' },
  { n: 32, name: '计算设置', val: '按默认计算设置计算' },
  { n: 33, name: '节点设置', val: '按默认节点设置计算' },
  { n: 34, name: '搭接设置', val: '按默认搭接设置计算' },
  { n: 35, name: '土建业务属性', val: '', grp: true },
  { n: 43, name: '显示样式', val: '', grp: true },
]

const errors = [{ floor: '第29层' }, { floor: '第28层' }, { floor: '第27层' }]

const axisTags = [
  { k: 'a', t: '5', x: 605, y: 222, l: 9 },
  { k: 'b', t: '6', x: 1018, y: 222, l: 9 },
  { k: 'c', t: '5', x: 605, y: 1026, l: 9 },
  { k: 'd', t: '7', x: 1246, y: 1026, l: 9 },
  { k: 'e', t: '1-D', x: 1345, y: 1026, l: 30 },
]

// axis bubbles are rough ten sided rings in the drawing
const ring = (x, y) => Array.from({ length: 10 }, (_, i) => {
  const a = (i / 10) * Math.PI * 2 + Math.PI / 2
  return `${(x + 15 * Math.cos(a)).toFixed(1)},${(y + 15.5 * Math.sin(a)).toFixed(1)}`
}).join(' ')

const taskIcons = [
  { k: 'win', svg: '<path fill="#000" d="M1 4.500l9.500-1.400V11.500H1zM11.500 3L23 1.200V11.500H11.500zM1 12.500h9.500v8.400L1 19.500zM11.500 12.500H23v10.300l-11.500-1.700z"/>' },
  { k: 'search', svg: '<circle cx="15" cy="9" r="7.500" fill="none" stroke="#111" stroke-width="1.500"/><path d="M9.500 14.500L2 22" stroke="#111" stroke-width="2"/>' },
  { k: 'cortana', svg: '<circle cx="12" cy="12" r="9" fill="none" stroke="#000" stroke-width="3"/>' },
  { k: 'view', svg: '<path d="M4 2h13M4 6h13v12H4zM4 22h13M21 2v5M21 10v3M21 16v6" fill="none" stroke="#000" stroke-width="1.600"/>' },
  { k: 'files', svg: '<path d="M2 4h8l2 2h10v4H2z" fill="#e8b93a"/><path d="M2 8h20v13H2z" fill="#f7ce5b"/><path d="M8 21v-6h8v6h-2.500v-3.500h-3V21z" fill="#2f8be0"/>' },
  { k: 'fox', svg: '<circle cx="12" cy="13" r="10" fill="#f0632a"/><path d="M12 2q6 3 9 9l-7-2z" fill="#ffb52e"/><circle cx="13" cy="13" r="5.500" fill="#7a3bd0"/><path d="M2 12q4 10 14 9-10-1-10-9z" fill="#e32a5c"/>' },
  { k: 'edge', run: true, svg: '<path d="M2 12C2 5 7 2 12 2c6 0 10 4 10 9 0 3-3 4-6 4-2 0-4-1-3-3 0-2-3-3-6-1-2 2-3 4-1 7z" fill="#32c48a"/><path d="M2 13c1-4 4-6 7-5 3 1 2 4 2 5 0 4 4 6 8 5-2 3-5 4-8 4-5 0-9-4-9-9z" fill="#1478d4"/>' },
  { k: 'store', svg: '<path d="M3 7h18v15H3z" fill="#222"/><path d="M8 7V4q0-2 2-2h4q2 0 2 2v3" fill="none" stroke="#222" stroke-width="1.600"/><rect x="8" y="10" width="3.500" height="3.500" fill="#f25022"/><rect x="12.500" y="10" width="3.500" height="3.500" fill="#7fba00"/><rect x="8" y="14.500" width="3.500" height="3.500" fill="#00a4ef"/><rect x="12.500" y="14.500" width="3.500" height="3.500" fill="#ffb900"/>' },
  { k: 'red', run: true, svg: '<circle cx="12" cy="12" r="10.500" fill="#d9302a"/><path d="M12 4q5 6 5 10a5 5 0 0 1-10 0q0-4 5-10z" fill="#fff"/><path d="M12 11q2.500 2 2.500 4a2.500 2.500 0 0 1-5 0q0-2 2.500-4z" fill="#d9302a"/>' },
  { k: 'cad', run: true, svg: '<rect x="1" y="2" width="22" height="20" fill="#14509e"/><path d="M1 2h22v3H1zM1 19h22v3H1z" fill="#8a9cb8"/><text x="3" y="16" font-size="10" font-family=\'Liberation Sans\' fill="#fff">CAD</text>' },
  { k: 'gtj', run: true, svg: '<rect x="2" y="1" width="20" height="22" rx="3" fill="#c8e6fb"/><path d="M6 5h12v3.500h-4V19h-4V8.500H6z" fill="#1c8cf2"/>' },
]
</script>

<style>
html, body { margin: 0; padding: 0; background: #f0f0f0; overflow: hidden; }
</style>

<style scoped>
.app {
  position: relative;
  width: 1920px;
  height: 1080px;
  display: flex;
  flex-direction: column;
  overflow: hidden;
  background: #f0f0f0;
  color: #3a3a3a;
  font-family: "Noto Sans", "Noto Sans CJK SC", sans-serif;
  font-size: 15px;
}
svg { display: block; flex: none; }
i { font-style: normal; }

.tri {
  display: inline-block;
  flex: none;
  width: 0;
  height: 0;
  margin-left: 8px;
  border-left: 4px solid transparent;
  border-right: 4px solid transparent;
  border-top: 5px solid #8a8a8a;
}
.tri.dark { border-top-color: #555; }
.tri.grey { border-top-color: #c4c4c4; }

/* header */
.top { display: flex; height: 52px; background: #fff; }
.logo { flex: none; }
.top-right { flex: 1; display: flex; flex-direction: column; min-width: 0; }
.title-row { position: relative; display: flex; align-items: center; height: 27px; padding-left: 6px; }
.quick { display: flex; align-items: center; gap: 12px; }
.q-undo { margin-left: 2px; }
.q-tri { margin-left: -7px; }
.quick2 { gap: 12.500px; margin-left: 10px; }
.q-more { color: #666; font-size: 13px; margin-left: -3px; }
.win-title { margin-left: 224px; color: #3a3a3a; font-size: 15px; letter-spacing: .3px; white-space: nowrap; line-height: 27px; }
.win-btns { display: flex; gap: 33px; margin-left: auto; padding-right: 18px; align-items: center; }

.menu-row { display: flex; align-items: center; height: 25px; }
.menu-item { padding: 0 16px; height: 25px; line-height: 24px; white-space: nowrap; flex: none; }
.menu-item.on { background: #2389f2; color: #fff; border-radius: 13px; padding: 0 17px; }
.menu-item.wide { padding: 0 18px; }
.user-area { margin-left: auto; display: flex; align-items: center; padding-bottom: 4px; }
.search {
  width: 399px;
  height: 20px;
  box-sizing: border-box;
  background: #f6f6f6;
  border: 1px solid #e8e8e8;
  display: flex;
  align-items: center;
  justify-content: space-between;
  padding: 0 9px 0 4px;
  color: #aaa;
  font-size: 14px;
}
.avatar { margin-left: 9px; }
.user { width: 33px; font-size: 15px; white-space: nowrap; }
.u-chat { margin-left: 14px; }
.u-help { margin-left: 13px; width: 16px; font-size: 18px; color: #555; line-height: 22px; white-space: nowrap; }
.u-help i { font-size: 10px; vertical-align: 1px; }
.u-shirt { margin-left: 9px; }
.u-up { margin-left: 9px; margin-right: 8px; }

/* ribbon */
.ribbon { display: flex; background: #fff; border-top: 1px solid #f0f0f0; box-sizing: border-box; border-bottom: 2px solid #dcdcdc; height: 121px; }
.group { flex: none; position: relative; display: flex; flex-direction: column; padding-top: 2px; box-sizing: border-box; }
.group::after {
  content: "";
  position: absolute;
  right: 0;
  top: 3px;
  bottom: 2px;
  width: 1px;
  background: #dedede;
}
.group-body { display: flex; height: 90px; }
.group-label {
  height: 20px;
  margin-top: 4px;
  display: flex;
  align-items: center;
  justify-content: center;
  color: #444;
  font-size: 15px;
}
.big-select {
  flex: none;
  width: 50px;
  height: 84px;
  margin-top: 2px;
  margin-right: 5px;
  background: #c1d8f0;
  border-radius: 4px;
  display: flex;
  flex-direction: column;
  align-items: center;
  padding-top: 4px;
  box-sizing: border-box;
}
.big-select span { margin-top: 3px; line-height: 24px; }
.big-smart {
  flex: none;
  width: 76px;
  padding-top: 3px;
  display: flex;
  flex-direction: column;
  align-items: center;
}
.big-smart span { line-height: 22px; white-space: nowrap; margin-top: 3px; }
.big-smart .tri { margin: 7px 0 0; }
.rcol { flex: none; display: flex; flex-direction: column; }
.ritem { height: 28.500px; display: flex; align-items: center; white-space: nowrap; color: #3a3a3a; }
.rtext { margin-left: 4px; }
.ritem.dis .rtext { color: #c4c4c4; }
.check {
  flex: none;
  width: 18px;
  height: 18px;
  border-radius: 3px;
  background: #2f86ee;
  display: flex;
  align-items: center;
  justify-content: center;
}

/* combo strip */
.combos { display: flex; gap: 5px; height: 34px; align-items: center; padding: 0 4px; box-sizing: border-box; background: #f0f0f0; }
.combo {
  width: 122px;
  height: 26px;
  background: #fff;
  border-radius: 3px;
  display: flex;
  align-items: center;
  justify-content: space-between;
  padding: 0 6px 0 4px;
  box-sizing: border-box;
}

/* panels */
.main { flex: 1; display: flex; min-height: 0; position: relative; }
.panel { background: #fff; border: 1px solid #dcdcdc; box-sizing: border-box; display: flex; flex-direction: column; }
.panel-bar {
  height: 15px;
  background: #e3e3e3;
  text-align: right;
  padding-right: 4px;
  line-height: 14px;
  color: #999;
  font-size: 16px;
  flex: none;
}
.nav { width: 217px; margin-left: 1px; margin-right: 6px; position: relative; }
.nav-head { height: 27px; line-height: 27px; background: #f0f0f0; padding-left: 10px; color: #8a8a8a; font-size: 15px; flex: none; }
.nav-tools {
  height: 35px;
  flex: none;
  display: flex;
  align-items: center;
  padding: 0 3px 0 11px;
  gap: 5px;
  border-bottom: 2px solid #e8e8e8;
  box-sizing: border-box;
}
.nav-btn { width: 29px; height: 28px; background: #c1d8f0; border-radius: 4px; display: flex; align-items: center; justify-content: center; }
.nav-btn1 { margin-left: auto; }
.tree { flex: 1; overflow: hidden; position: relative; padding-top: 2px; box-sizing: border-box; min-height: 0; }
.tree-row { height: 30px; display: flex; align-items: center; padding-left: 13px; white-space: nowrap; box-sizing: border-box; position: relative; }
.tree-row.child { padding-left: 54px; gap: 7px; width: 203px; }
.tree-row.sel::before {
  content: "";
  position: absolute;
  left: 50px;
  right: 4px;
  top: 2px;
  bottom: 2px;
  background: #c1d8f0;
}
.tree-row > * { position: relative; }
.tw {
  width: 0;
  height: 0;
  margin-right: 10px;
  margin-left: 1px;
  border-top: 4px solid transparent;
  border-bottom: 4px solid transparent;
  border-left: 5px solid #888;
}
.tw.open {
  margin-left: -1px;
  margin-right: 8px;
  border-left: 4px solid transparent;
  border-right: 4px solid transparent;
  border-top: 5px solid #888;
  border-bottom: 0;
}
.v-thumb { position: absolute; width: 9px; background: #c9c9c9; border-radius: 5px; }
.nav-thumb { left: 203px; top: 20px; height: 558px; }
.h-scroll { height: 18px; flex: none; display: flex; align-items: center; position: relative; padding: 0 8px; }
.h-thumb { width: 143px; height: 9px; background: #c9c9c9; border-radius: 5px; margin-left: 4px; }
.ha {
  width: 0;
  height: 0;
  margin-left: 23px;
  border-top: 5px solid transparent;
  border-bottom: 5px solid transparent;
  border-left: 5px solid #555;
}
.ha.left { margin-left: 0; border-left: 0; border-right: 5px solid #555; }

.mid { width: 349px; flex: none; display: flex; flex-direction: column; gap: 5px; margin-right: 6px; }
.tabs { height: 28px; background: #f0f0f0; display: flex; flex: none; border-bottom: 1px solid #dcdcdc; box-sizing: border-box; }
.tab { width: 81px; text-align: center; line-height: 27px; background: #e0e0e0; color: #999; font-size: 15px; }
.tab.on { background: #f0f0f0; color: #222; font-weight: 700; }

.mid-top { height: 447px; position: relative; }
.list-tools { height: 34px; flex: none; display: flex; align-items: center; padding-left: 4px; border-bottom: 1px solid #eee; box-sizing: border-box; position: relative; }
.lt { display: flex; align-items: center; gap: 4px; margin-right: 14px; white-space: nowrap; }
.lt .tri { margin-left: 7px; margin-right: 0; }
.lt-more { position: absolute; right: 4px; color: #666; font-size: 9px; letter-spacing: -1px; }
.list-search { height: 25px; flex: none; display: flex; align-items: center; justify-content: space-between; padding: 0 9px 0 3px; color: #aaa; border-bottom: 1px solid #e8e8e8; box-sizing: border-box; }
.list { flex: 1; position: relative; overflow: hidden; padding-top: 3px; border-bottom: 1px solid #e0e0e0; }
.list-row { height: 30px; display: flex; align-items: center; padding-left: 75px; }
.list-row span { padding: 3px 20px 3px 4px; }
.list-row span.sel { background: #c1d8f0; border-radius: 3px; padding-right: 18px; }
.list-thumb { left: 335px; top: 48px; height: 50px; }

.mid-bot { flex: 1; min-height: 0; }
.props {
  flex: 1;
  min-height: 0;
  position: relative;
  background: linear-gradient(90deg, #ececec 27px, #fff 27px);
}
.prow { display: grid; grid-template-columns: 27px 126px 174px; height: 26.300px; box-sizing: border-box; }
.prow > div { border-bottom: 1px solid #e2e2e2; border-right: 1px solid #e2e2e2; box-sizing: border-box; line-height: 25px; white-space: nowrap; overflow: hidden; }
.pn { text-align: center; color: #444; font-size: 15px; }
.pn.blank { background: #fff; }
.pname { padding-left: 39px; position: relative; background: #fff; }
.pname.guide::before { content: ""; position: absolute; left: 11px; top: 0; bottom: 0; width: 1px; background: #ddd; }
.pname.guide.last::before { bottom: 50%; }
.pname.guide::after { content: ""; position: absolute; left: 11px; top: 50%; width: 20px; height: 1px; background: #ddd; }
.pname.link { color: #1f55e8; }
.pname.grp { padding-left: 26px; }
.plus {
  position: absolute;
  left: 3px;
  top: 5px;
  width: 14px;
  height: 14px;
  box-sizing: border-box;
  border: 1px solid #bbb;
  border-radius: 2px;
  line-height: 12px;
  text-align: center;
  font-size: 12px;
  color: #555;
}
.pval { padding-left: 4px; background: #fff; }
.phead > div { border-bottom: 2px solid #e2e2e2; text-align: center; padding: 0; }
.phead .pval { background: #7cb7f5; color: #fff; }
.act .pn { background: #6eb0f0; color: #fff; font-weight: 700; }
.prow.act .pval { border: 2px solid #6a6a6a; line-height: 22px; padding-left: 3px; }
.prop-thumb { left: 335px; top: 229px; height: 91px; }

/* canvas */
.canvas { flex: 1; position: relative; background: #000; overflow: hidden; min-width: 0; }
.cad { position: absolute; left: 0; top: 0; }
.cad-big { fill: #fff; font-family: "Liberation Sans", sans-serif; }
.cad-tag { fill: #e8e8e8; font-family: "Liberation Sans", sans-serif; font-size: 22px; }
.cad-y, .cad-x { font-family: "Liberation Sans", sans-serif; font-size: 16px; }
.cad-y { fill: #00c800; }
.cad-x { fill: #ff0000; }
.view-bar {
  position: absolute;
  right: 0;
  top: 0;
  width: 41px;
  height: 306px;
  background: #fff;
  border-radius: 0 0 0 3px;
  display: flex;
  flex-direction: column;
  align-items: center;
  padding-top: 14px;
  box-sizing: border-box;
}
.vb { margin-bottom: 3px; }
.vb-frame { margin-bottom: 4px; }
.vb-tri { margin: 6.500px 0 3.500px; }
.vb-sep { width: 30px; height: 1px; background: #999; margin: 3px 0 4px; flex: none; }

/* dialog */
.dialog {
  position: absolute;
  left: 570px;
  top: 185px;
  width: 627px;
  height: 348px;
  display: flex;
  flex-direction: column;
  background: linear-gradient(90deg, #f0f0f0, #e4e4e4 16px);
  border: 1px solid #d2d2d2;
  box-sizing: border-box;
  box-shadow: 0 0 6px rgba(0, 0, 0, .22);
}
.dlg-title {
  height: 48px;
  flex: none;
  display: flex;
  align-items: center;
  gap: 21px;
  padding: 0 16px 5px 13px;
  box-sizing: border-box;
  background: linear-gradient(90deg, #f7f7f7 0, #f2f2f2 225px, #f0e3fb 240px, #f0e3fb 497px, #e2e2e2 510px);
}
.dlg-text { flex: 1; font-size: 17.500px; color: #444; white-space: nowrap; }
.dlg-table { flex: 1; margin: 0 15px 0 14px; background: #fff; border: 1px solid #c8c8c8; min-height: 0; box-sizing: border-box; }
.dlg-row { display: flex; height: 25px; align-items: center; white-space: nowrap; }
.dlg-head { height: 20px; background: #f0f0f0; border-bottom: 1px solid #c8c8c8; }
.dlg-head span { text-align: center; border-right: 1px solid #c8c8c8; height: 20px; line-height: 20px; box-sizing: border-box; }
.dlg-head .c-desc { border-right: 0; }
.c-type { width: 65px; flex: none; }
.c-name { width: 60px; flex: none; }
.c-floor { width: 60px; flex: none; }
.c-desc { flex: 1; }
.c-left { display: flex; align-items: center; gap: 7px; padding-left: 3px; box-sizing: border-box; }
.c-cell { padding-left: 3px; box-sizing: border-box; }
.dlg-foot {
  height: 14px;
  flex: none;
  display: flex;
  justify-content: flex-end;
  padding: 2px 3px 0 0;
  box-sizing: border-box;
  background: linear-gradient(90deg, #e4e4e4 385px, #f0e3fb 397px, #f0e3fb 497px, #e2e2e2 505px);
}

/* taskbar */
.taskbar {
  height: 39px;
  flex: none;
  display: flex;
  align-items: stretch;
  justify-content: space-between;
  background: radial-gradient(ellipse 70px 40px at 915px 50%, #e3e8f2, transparent), #ebebeb;
  border-top: 1px solid #d6d6d6;
  box-sizing: border-box;
}
.tb-left { display: flex; margin-left: -2px; }
.tb-icon { width: 46px; display: flex; align-items: center; justify-content: center; position: relative; }
.tb-icon:nth-child(4) { margin-right: 3px; }
.tb-icon.run::after {
  content: "";
  position: absolute;
  left: 5px;
  right: 5px;
  bottom: 0;
  height: 3px;
  background: #1a78d6;
}
.tray { display: flex; align-items: center; padding-right: 30px; }
.t-wx { margin-left: 14px; }
.t-qq { margin-left: 11px; }
.t-wifi { margin-left: 11px; }
.t-bat { margin-left: 9px; }
.t-vol { margin-left: 9px; }
.t-lang { margin-left: 10px; color: #111; font-size: 16px; }
.t-pin { margin-left: 18px; border: 1px solid #888; color: #222; font-size: 14px; width: 19px; height: 19px; line-height: 18px; text-align: center; box-sizing: border-box; }
.t-time { margin-left: 23px; color: #222; font-size: 15px; }
.t-note { margin-left: 25px; }
</style>
